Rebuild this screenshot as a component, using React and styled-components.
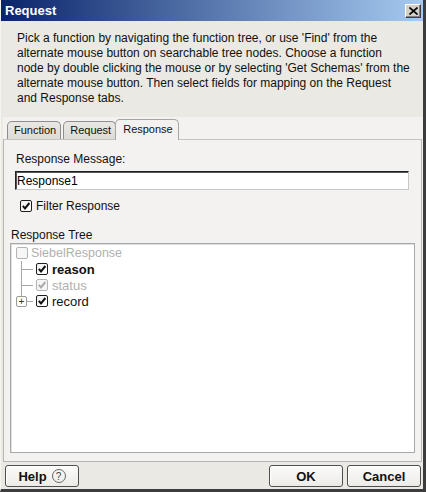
import styled, { createGlobalStyle, css } from "styled-components"

const GlobalStyle = createGlobalStyle`
  html, body {
    margin: 0;
    padding: 0;
    background: #ffffff;
  }
  * {
    box-sizing: border-box;
  }
`

const tree = [
  { id: "reason", label: "reason", checked: true, bold: true },
  { id: "status", label: "status", checked: true, disabled: true },
  { id: "record", label: "record", checked: true, expandable: true },
]

export default function App() {
  return (
    <Window>
      <GlobalStyle />
      <TitleBar>
        <Title>Request</Title>
        <CloseButton aria-label="close">
          <svg width="9" height="8" viewBox="0 0 9 8">
            <path d="M0.5 0.5 L8.5 7.5 M8.5 0.5 L0.5 7.5" stroke="#000" strokeWidth="1.6" />
          </svg>
        </CloseButton>
      </TitleBar>

      <Intro>
        Pick a function by navigating the function tree, or use 'Find' from the<br />
        alternate mouse button on searchable tree nodes. Choose a function<br />
        node by double clicking the mouse or by selecting 'Get Schemas' from the<br />
        alternate mouse button. Then select fields for mapping on the Request<br />
        and Response tabs.
      </Intro>

      <TabArea>
        <TabStrip>
          <Tab>Function</Tab>
          <Tab>Request</Tab>
          <Tab active>Response</Tab>
        </TabStrip>

        <Panel>
          <MessageSection>
            <Label>Response Message:</Label>
            <TextInput defaultValue="Response1" />
            <CheckRow>
              <Checkbox checked />
              <span>Filter Response</span>
            </CheckRow>
          </MessageSection>

          <TreeSection>
            <TreeLabel>Response Tree</TreeLabel>
            <TreeBox>
              <RootRow>
                <Checkbox disabled />
                <NodeText disabled>SiebelResponse</NodeText>
              </RootRow>
              {tree.map((node, i) => (
                <ChildRow key={node.id}>
                  <Gutter last={i === tree.length - 1}>
                    {node.expandable && <Expander>+</Expander>}
                  </Gutter>
                  <Checkbox checked={node.checked} disabled={node.disabled} />
                  <NodeText bold={node.bold} disabled={node.disabled} child>
                    {node.label}
                  </NodeText>
                </ChildRow>
              ))}
            </TreeBox>
          </TreeSection>
        </Panel>
      </TabArea>

      <Footer>
        <Button>
          Help <HelpIcon>?</HelpIcon>
        </Button>
        <RightButtons>
          <Button>OK</Button>
          <Button>Cancel</Button>
        </RightButtons>
      </Footer>
    </Window>
  )
}

function Checkbox({ checked, disabled }) {
  return (
    <Box disabled={disabled}>
      {checked && (
        <svg width="10" height="10" viewBox="0 0 10 10">
          <path
            d="M1.8 4.8 L4 7.4 L8.4 2"
            fill="none"
            stroke={disabled ? "#aaaaaa" : "#111"}
            strokeWidth="2"
          />
        </svg>
      )}
    </Box>
  )
}

const Window = styled.div`
  width: 426px;
  height: 492px;
  display: flex;
  flex-direction: column;
  background: #eae9e3;
  border-right: 3px solid #3c3c3c;
  border-bottom: 3px solid #3c3c3c;
  border-left: 1px solid #f4f4f0;
  font-family: "Liberation Sans", Arial, sans-serif;
  color: #000;
`

const TitleBar = styled.div`
  height: 21px;
  display: flex;
  align-items: center;
  justify-content: space-between;
  padding: 0 2px 0 4px;
  background: linear-gradient(to right, #0a246a, #a6caf0);
`

const Title = styled.div`
  color: #fff;
  font-weight: bold;
  font-size: 13px;
`

const CloseButton = styled.div`
  width: 16px;
  height: 14px;
  display: flex;
  align-items: center;
  justify-content: center;
  background: #d4d0c8;
  border: 1px solid;
  border-color: #ffffff #404040 #404040 #ffffff;
  box-shadow: inset -1px -1px 0 #808080;
`

const Intro = styled.div`
  padding: 10px 0 11px 16px;
  font-size: 12px;
  line-height: 15px;
  white-space: nowrap;
  color: #111;
`

const TabArea = styled.div`
  flex: 1;
  display: flex;
  flex-direction: column;
  margin-left: 2px;
  background: #f3f2f0;
`

const TabStrip = styled.div`
  height: 22px;
  display: flex;
  align-items: flex-end;
  padding-left: 4px;
  gap: 2px;
  position: relative;
  z-index: 1;
`

const Tab = styled.div`
  height: 18px;
  padding: 0 4px 0 6px;
  font-size: 11px;
  line-height: 17px;
  border: 1px solid #8e8e8e;
  border-bottom: none;
  border-radius: 5px 5px 0 0;
  background: linear-gradient(#e9e8e4, #dcdbd5);
  color: #111;
  ${(p) =>
    p.active &&
    css`
      height: 21px;
      margin-bottom: -1px;
      margin-left: -3px;
      padding: 2px 5px 0 7px;
      line-height: 14px;
      background: #f3f2f0;
      border-color: #a5a5a5;
    `}
`

const Panel = styled.div`
  flex: 1;
  display: flex;
  flex-direction: column;
  border: 1px solid #b5b5b5;
  border-top-color: #c4c4c4;
  margin-right: 1px;
  background: #f3f2f0;
`

const MessageSection = styled.div`
  padding: 12px 11px 0 11px;
`

const Label = styled.div`
  font-size: 12px;
  line-height: 15px;
  padding-left: 1px;
  color: #111;
`

const TextInput = styled.input`
  display: block;
  width: 394px;
  height: 19px;
  margin-top: 4px;
  padding: 0 1px;
  font-family: "Liberation Sans", Arial, sans-serif;
  font-size: 12px;
  color: #000;
  background: #fff;
  border: 1px solid;
  border-color: #222 #c8c8c8 #c8c8c8 #222;
  box-shadow: inset 1px 1px 0 #555;
  outline: none;
`

const CheckRow = styled.div`
  display: flex;
  align-items: center;
  gap: 4px;
  height: 16px;
  margin-top: 8px;
  padding-left: 5px;
  font-size: 12px;
  color: #111;
`

const Box = styled.span`
  width: 12px;
  height: 12px;
  flex: none;
  display: flex;
  align-items: center;
  justify-content: center;
  border: 1px solid ${(p) => (p.disabled ? "#b4b4b4" : "#1e1e1e")};
  border-radius: 2px;
  background: ${(p) => (p.disabled ? "#f6f6f6" : "linear-gradient(135deg, #f0f0f0, #ffffff)")};
`

const TreeSection = styled.div`
  flex: 1;
  display: flex;
  flex-direction: column;
  padding: 14px 6px 8px 6px;
`

const TreeLabel = styled.div`
  font-size: 12px;
  line-height: 15px;
  padding-left: 1px;
  color: #111;
`

const TreeBox = styled.div`
  flex: 1;
  background: #fff;
  border: 1px solid #a8a8a8;
  box-shadow: inset 1px 1px 0 #e0e0e0;
  padding: 1px 0 0 5px;
`

const RootRow = styled.div`
  display: flex;
  align-items: center;
  gap: 3px;
  height: 16px;
`

const ChildRow = styled.div`
  display: flex;
  align-items: center;
  height: 16px;
`

const Gutter = styled.div`
  width: 20px;
  height: 16px;
  position: relative;
  &::before {
    content: "";
    position: absolute;
    left: 5px;
    top: 0;
    height: ${(p) => (p.last ? "8px" : "16px")};
    border-left: 1px solid #a6a6a6;
  }
  &::after {
    content: "";
    position: absolute;
    left: 5px;
    width: 12px;
    top: 8px;
    border-top: 1px solid #a6a6a6;
  }
`

const Expander = styled.span`
  position: absolute;
  left: 0;
  top: 3px;
  width: 11px;
  height: 11px;
  z-index: 1;
  display: flex;
  align-items: center;
  justify-content: center;
  border: 1px solid #9a9a9a;
  border-radius: 2px;
  background: #fff;
  font-size: 10px;
  line-height: 9px;
  color: #333;
`

const NodeText = styled.span`
  font-size: ${(p) => (p.child ? "13px" : "12.5px")};
  font-weight: ${(p) => (p.bold ? "bold" : "normal")};
  color: ${(p) => (p.disabled ? "#b0b0b0" : "#111")};
  margin-left: ${(p) => (p.child ? "4px" : "0")};
`

const Footer = styled.div`
  display: flex;
  justify-content: space-between;
  padding: 3px 2px 2px 4px;
`

const RightButtons = styled.div`
  display: flex;
  gap: 4px;
`

const Button = styled.div`
  width: 74px;
  height: 22px;
  display: flex;
  align-items: center;
  justify-content: center;
  gap: 5px;
  font-size: 13px;
  font-weight: bold;
  color: #111;
  border: 1px solid #4e4e4e;
  border-radius: 3px;
  background: linear-gradient(#fbfbfa, #ecebe8);
  box-shadow: inset 1px 1px 0 #fff;
`

const HelpIcon = styled.span`
  width: 14px;
  height: 14px;
  display: flex;
  align-items: center;
  justify-content: center;
  border: 1px solid #666;
  border-radius: 50%;
  font-size: 10px;
  font-weight: normal;
  color: #444;
`
